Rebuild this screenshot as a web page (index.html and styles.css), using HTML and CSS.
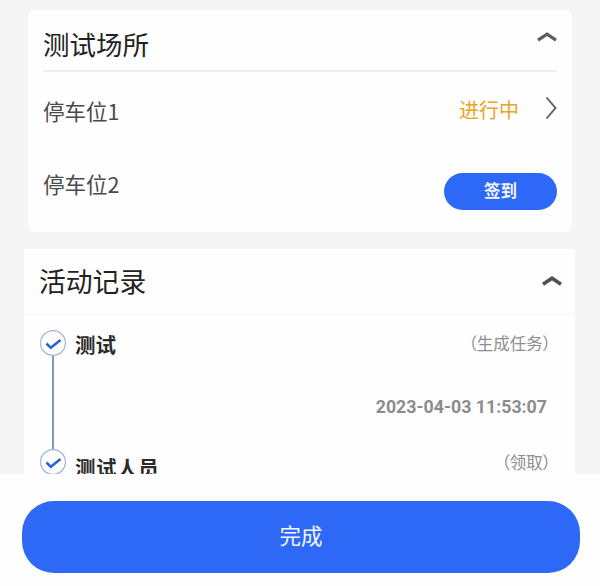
FILE: index.html
```html
<!DOCTYPE html>
<html lang="zh-CN">
<head>
<meta charset="utf-8">
<title>测试场所</title>
<link rel="stylesheet" href="styles.css">
</head>
<body>
<div class="page">
  <main class="scroll">
    <section class="card card-site">
      <header class="site-head">
        <h2 class="title">测试场所</h2>
        <svg class="chev-up" viewBox="0 0 22 10"><path d="M2 8.2 11 2.2 20 8.2"/></svg>
      </header>
      <div class="site-row row-one">
        <span class="site-name">停车位1</span>
        <div class="site-state">
          <span class="state-text">进行中</span>
          <svg class="chev-right" viewBox="0 0 12 24"><path d="M1.5 1.5 10.5 12 1.5 22.5"/></svg>
        </div>
      </div>
      <div class="site-row row-two">
        <span class="site-name">停车位2</span>
        <button class="sign-btn">签到</button>
      </div>
    </section>

    <section class="card card-log">
      <header class="log-head">
        <h2 class="title">活动记录</h2>
        <svg class="chev-up chev-dark" viewBox="0 0 22 10"><path d="M2 8.2 11 2.2 20 8.2"/></svg>
      </header>
      <div class="log-body">
        <div class="log-item">
          <div class="marker">
            <svg class="check" viewBox="0 0 26 26"><circle cx="13" cy="13" r="12.4"/><path d="M6.5 13.5 10.8 17.8 20.5 10"/></svg>
            <span class="line"></span>
          </div>
          <div class="log-main">
            <div class="log-top"><span class="who">测试</span><span class="act">（生成任务）</span></div>
            <div class="time">2023-04-03 11:53:07</div>
          </div>
        </div>
        <div class="log-item">
          <div class="marker">
            <svg class="check" viewBox="0 0 26 26"><circle cx="13" cy="13" r="12.4"/><path d="M6.5 13.5 10.8 17.8 20.5 10"/></svg>
          </div>
          <div class="log-main">
            <div class="log-top"><span class="who who-late">测试人员</span><span class="act">（领取）</span></div>
          </div>
        </div>
      </div>
    </section>
  </main>
  <footer class="foot">
    <button class="done-btn">完成</button>
  </footer>
</div>
</body>
</html>
```

FILE: styles.css
```css
* { box-sizing: border-box; }
html, body { margin: 0; height: 100%; }
body {
  background: #f5f5f5;
  font-family: "Noto Sans CJK SC", "Noto Sans", sans-serif;
  overflow: hidden;
}
.page { width: 600px; height: 586px; display: flex; flex-direction: column; }
.scroll {
  height: 474px;
  overflow: hidden;
  padding-top: 10px;
  display: flex;
  flex-direction: column;
  gap: 17px;
  flex: none;
}
.card { background: #fefefe; flex: none; }
.card-site {
  margin: 0 28px;
  height: 222px;
  border-radius: 6px;
  padding: 0 15px;
}
.title {
  margin: 0;
  font-size: 26.5px;
  font-weight: 400;
  line-height: 36px;
  color: #222;
}
.site-head {
  height: 62px;
  border-bottom: 2px solid #eeeeee;
  display: flex;
  align-items: center;
  justify-content: space-between;
  padding-top: 8px;
}
.chev-up {
  width: 22px;
  height: 10px;
  margin: -14px -1px 0 0;
  fill: none;
  stroke: #5c5c5c;
  stroke-width: 3.2;
}
.chev-dark { stroke: #505050; margin: -1px 0 0 0; stroke-width: 3.6; }
.site-row { display: flex; align-items: center; justify-content: space-between; }
.row-one { height: 82px; padding-bottom: 1px; }
.row-two { height: 64px; }
.site-name { font-size: 21.5px; line-height: 30px; color: #4a4a4a; margin-top: -4px; }
.site-state { display: flex; align-items: center; gap: 26px; margin-top: -5px; }
.state-text { font-size: 20px; line-height: 28px; color: #e9a526; }
.chev-right {
  width: 12px;
  height: 24px;
  fill: none;
  stroke: #5f5f5f;
  stroke-width: 1.9;
  margin-top: -5px;
}
.sign-btn {
  width: 113px;
  height: 37px;
  border: 0;
  border-radius: 19px;
  background: #2d69f6;
  color: #f4f7ff;
  font: 700 16.5px/35px "Noto Sans CJK SC", sans-serif;
  padding: 0 0 2px;
  margin-top: 11px;
}
.card-log { margin: 0 25px 0 24px; }
.log-head {
  height: 66px;
  padding: 0 12px 1px 16px;
  display: flex;
  align-items: center;
  justify-content: space-between;
  border-bottom: 1px solid #f8f8f8;
}
.log-head .title { font-size: 26.8px; margin-left: -1px; }
.log-body { padding: 15px 25px 40px 16px; }
.log-item { display: flex; gap: 10px; height: 119px; }
.marker { width: 26px; display: flex; flex-direction: column; align-items: center; flex: none; }
.check { width: 26px; height: 26px; flex: none; fill: #fff; }
.check circle { stroke: #9db6d2; stroke-width: 1.2; }
.check path { fill: none; stroke: #2d62d8; stroke-width: 2.6; }
.line { width: 1.5px; flex: 1; background: #7d9fb8; }
.log-main { flex: 1; min-width: 0; }
.log-top { display: flex; align-items: flex-start; justify-content: space-between; height: 26px; }
.who { font-size: 20.5px; font-weight: 700; line-height: 28px; color: #2b2b2b; margin-left: -1px; }
.who-late { margin-top: 4px; flex: none; letter-spacing: 0.6px; }
.act {
  font-size: 16.5px;
  line-height: 26px;
  color: #8e8e8e;
  font-feature-settings: "palt";
  margin-right: -1px;
}
.time {
  margin-top: 37px;
  text-align: right;
  font-family: Roboto, sans-serif;
  font-size: 17.8px;
  font-weight: 700;
  line-height: 28px;
  color: #8c8c8c;
  padding-right: 3px;
}
.foot {
  flex: 1;
  background: #fefefe;
  padding: 27px 20px 0 22px;
  position: relative;
}
.done-btn {
  display: block;
  width: 100%;
  height: 72px;
  border: 0;
  border-radius: 32px;
  background: #2d69f6;
  color: #f4f7ff;
  font: 400 21.5px/68px "Noto Sans CJK SC", sans-serif;
  padding: 0 0 4px;
}
```
